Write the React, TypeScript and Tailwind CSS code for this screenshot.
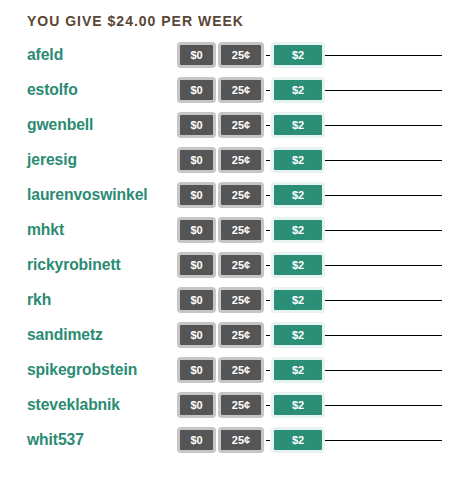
import React from "react";

const names = [
  "afeld",
  "estolfo",
  "gwenbell",
  "jeresig",
  "laurenvoswinkel",
  "mhkt",
  "rickyrobinett",
  "rkh",
  "sandimetz",
  "spikegrobstein",
  "steveklabnik",
  "whit537",
];

export default function App() {
  return (
    <div
      className="w-[465px] h-[480px] bg-white pl-[27px] pt-[13px]"
      style={{ fontFamily: '"Liberation Sans", Arial, Helvetica, sans-serif' }}
    >
      <div className="text-[14px] leading-[16px] font-bold tracking-[1px] text-[#5b4636]">
        YOU GIVE $24.00 PER WEEK
      </div>
      <div className="mt-[13px] flex flex-col gap-[9px]">
        {names.map((n) => (
          <div key={n} className="flex items-center h-[26px]">
            <div className="w-[150px] text-[15.7px] font-bold text-[#2b8b73] tracking-[-0.1px]">
              {n}
            </div>
            <div className="w-[39px] h-[26px] border-[3px] border-[#c6c6c6] rounded-[4px] bg-[#555555] flex items-center justify-center text-white text-[11px] font-bold">
              $0
            </div>
            <div className="ml-[2px] w-[46px] h-[26px] border-[3px] border-[#c6c6c6] rounded-[4px] bg-[#555555] flex items-center justify-center text-white text-[11px] font-bold">
              25¢
            </div>
            <div className="ml-[2px] w-[4px] h-px bg-black" />
            <div className="ml-px w-[54px] h-[26px] border-[3px] border-[#e7f3f0] rounded-[4px] bg-[#2b8f78] flex items-center justify-center text-white text-[11px] font-bold">
              $2
            </div>
            <div className="w-[117px] h-px bg-black" />
          </div>
        ))}
      </div>
    </div>
  );
}
